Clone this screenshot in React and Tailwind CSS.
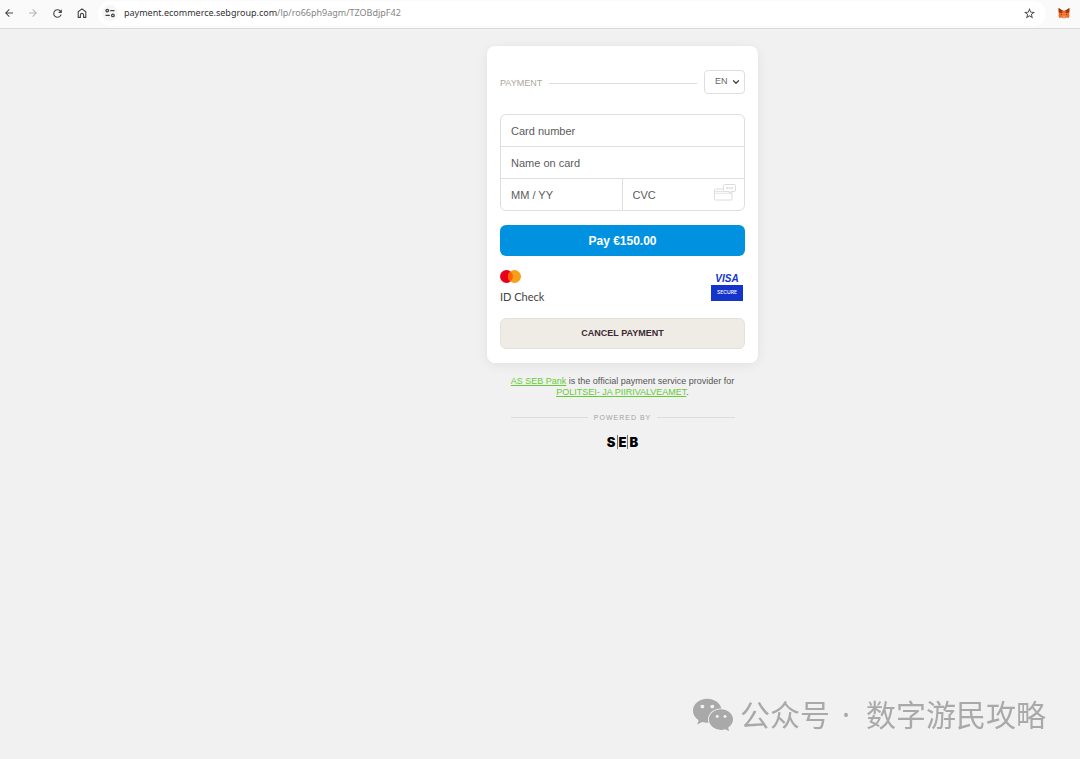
import { FaWeixin } from 'react-icons/fa'
import { MdArrowBack, MdArrowForward, MdRefresh, MdStarBorder } from 'react-icons/md'
import { ChevronDown } from 'lucide-react'

function HomeIcon() {
  return (
    <svg viewBox="0 0 12 12" className="size-3" fill="none" stroke="currentColor" strokeWidth="1.1">
      <path d="M2.2 10.4V4.8L6 1.9l3.8 2.9v5.6H7.6V8a1.6 1.6 0 0 0-3.2 0v2.4z" strokeLinejoin="round" />
    </svg>
  )
}

function SiteInfoIcon() {
  return (
    <svg viewBox="0 0 12 12" className="size-3" fill="none" stroke="currentColor" strokeWidth="1.3">
      <circle cx="3.3" cy="3.6" r="1.3" />
      <path d="M6.2 3.6h4.3M1.5 8.4h4.3" />
      <circle cx="8.9" cy="8.4" r="1.3" />
    </svg>
  )
}

function FoxIcon() {
  return (
    <svg viewBox="0 0 12 12" className="size-3">
      <path d="M.6 1 4.6 3.6h2.8L11.4 1l.3 3.6-.6 2.6.5 1.6-.9 2.3-2.2-.6-1.2.8H4.7l-1.2-.8-2.2.6L.4 8.8l.5-1.6L.3 4.6z" fill="#f26a26" />
      <path d="M.6 1 4.6 3.6 4 6 1 5.4zM11.4 1 7.4 3.6 8 6l3-.6z" fill="#93391b" />
      <path d="M4 6h4l.5 2.8L7.3 10H4.7L3.5 8.8z" fill="#f97a2e" />
      <path d="M4.7 9.6h2.6l.2 1.2h-3z" fill="#cbb9ae" />
      <path d="m3.1 6.8 1.4.6-1.3.4zM8.9 6.8l-1.4.6 1.3.4z" fill="#333" />
    </svg>
  )
}

function CvcIcon() {
  return (
    <svg viewBox="0 0 22 17" className="h-[17px] w-[22px]" fill="none" stroke="#dcdcdc">
      <rect x=".5" y="5" width="17.5" height="11" rx="1" />
      <path d="M.5 7.5H11M.5 9.3h17.5" strokeWidth=".8" />
      <path d="M10.5.5h10q1 0 1 1v5q0 1-1 1H17L15.5 9.5 15 7.5h-4.5q-1 0-1-1v-5q0-1 1-1z" fill="#fff" />
      <path d="M12 3.5h7M12 4.5h7" strokeDasharray="2 .5" strokeWidth=".8" />
    </svg>
  )
}

function MastercardMark() {
  return (
    <svg viewBox="0 0 21 13" className="h-[13px] w-[21px]">
      <circle cx="6.5" cy="6.5" r="6.5" fill="#eb001b" />
      <circle cx="14.5" cy="6.5" r="6.5" fill="#f79e1b" />
      <path d="M10.5 1.4a6.5 6.5 0 0 1 0 10.2 6.5 6.5 0 0 1 0-10.2z" fill="#ff5f00" />
    </svg>
  )
}

function BrowserBar() {
  return (
    <header className="flex h-[29px] items-center border-b border-[#dadada] bg-[#fafafa] pb-0.5 pl-[3px] pr-2.5 text-[#444]">
      <nav className="flex items-center gap-3">
        <button aria-label="Back"><MdArrowBack size={12} /></button>
        <button aria-label="Forward" className="text-[#b5b5b5]"><MdArrowForward size={12} /></button>
        <button aria-label="Reload"><MdRefresh size={13} /></button>
        <button aria-label="Home"><HomeIcon /></button>
      </nav>
      <div className="ml-2.5 flex h-[25px] flex-1 items-center rounded-full bg-white pl-1 pr-2.5">
        <button aria-label="Site information" className="flex size-4 items-center justify-center rounded-full bg-[#f6f6f6]">
          <SiteInfoIcon />
        </button>
        <div role="textbox" aria-label="Address" className="ml-1.5 flex-1 font-['Noto_Sans',sans-serif] text-[9px] text-[#333]">
          payment.ecommerce.sebgroup.com<span className="text-[#858585]">/lp/ro66ph9agm/TZOBdjpF42</span>
        </div>
        <button aria-label="Bookmark"><MdStarBorder size={13} /></button>
      </div>
      <button aria-label="Wallet" className="ml-3"><FoxIcon /></button>
    </header>
  )
}

const inputClass = 'h-[31px] w-full min-w-0 bg-transparent px-2.5 pt-px text-[11px] text-[#333] outline-none placeholder:text-[#5c5c5c]'

function PaymentCard() {
  return (
    <form className="w-[271px] rounded-lg bg-white px-[13px] pb-3.5 pt-6 shadow-[0_2px_12px_rgba(0,0,0,0.07)]">
      <div className="flex items-center">
        <h1 className="pt-1 text-[9px] text-[#aca79e]">PAYMENT</h1>
        <div className="mx-[7px] mt-0.5 h-px flex-1 bg-[#dedede]" />
        <div className="relative flex">
          <select aria-label="Language" className="h-6 w-[41px] appearance-none rounded border border-[#dedede] bg-white pl-2.5 text-[9px] text-[#666]">
            <option>EN</option>
          </select>
          <ChevronDown size={10} strokeWidth={3} className="pointer-events-none absolute right-1 top-[7px] text-[#444]" />
        </div>
      </div>

      <div className="mt-5 divide-y divide-[#dedede] rounded-md border border-[#dedede]">
        <div className="flex">
          <input aria-label="Card number" placeholder="Card number" className={inputClass} />
        </div>
        <div className="flex">
          <input aria-label="Name on card" placeholder="Name on card" className={inputClass} />
        </div>
        <div className="grid grid-cols-2 divide-x divide-[#dedede]">
          <div className="flex">
            <input aria-label="Expiry date" placeholder="MM / YY" className={inputClass} />
          </div>
          <div className="flex items-start pr-2">
            <input aria-label="CVC" placeholder="CVC" className={inputClass} />
            <div className="shrink-0 pt-[5px]"><CvcIcon /></div>
          </div>
        </div>
      </div>

      <button type="button" className="mt-3.5 h-[31px] w-full rounded-md bg-[#0092e1] text-[12px] font-bold text-white">
        Pay €150.00
      </button>

      <div className="mt-3.5 flex h-8 items-start justify-between">
        <div>
          <MastercardMark />
          <div className="mt-1.5 font-['Lato',sans-serif] text-[11px] leading-4 text-[#444]">ID Check</div>
        </div>
        <div className="mr-0.5 mt-0.5 flex w-8 flex-col items-center">
          <div className="text-[10px] font-bold italic leading-[13px] text-[#1434cb]">VISA</div>
          <div className="flex h-4 w-full items-center justify-center bg-[#1434cb] font-['Inter',sans-serif] text-[5px] font-medium text-white">
            SECURE
          </div>
        </div>
      </div>

      <button type="button" className="mt-4 h-[31px] w-full rounded-md border border-[#e6e2da] bg-[#efebe5] text-[9px] font-bold text-[#3a2a32]">
        CANCEL PAYMENT
      </button>
    </form>
  )
}

function Footer() {
  return (
    <footer className="mt-[13px] w-[224px] text-center text-[9px] leading-[11px] text-[#555]">
      <p>
        <a href="#seb" className="text-[#66cc33] underline">AS SEB Pank</a> is the official payment service provider for{' '}
        <a href="#merchant" className="text-[#66cc33] underline">POLITSEI- JA PIIRIVALVEAMET</a>.
      </p>
      <div className="mt-3.5 flex items-center gap-1.5">
        <div className="h-px flex-1 bg-[#dcdcdc]" />
        <span className="text-[7px] tracking-[1px] text-[#a3a3a3]">POWERED BY</span>
        <div className="h-px flex-1 bg-[#dcdcdc]" />
      </div>
      <div className="mt-3 flex justify-center font-['Inter',sans-serif] text-[13px] font-black leading-[14px] text-black">
        <span>S</span>
        <span className="mx-px border-x border-[#777] px-px">E</span>
        <span>B</span>
      </div>
    </footer>
  )
}

export default function App() {
  return (
    <div className="flex min-h-screen flex-col bg-[#f1f1f1] font-['Liberation_Sans',Arial,sans-serif]">
      <BrowserBar />
      <main className="flex flex-1 flex-col items-center pl-[165px] pt-[17px]">
        <PaymentCard />
        <Footer />
      </main>
      <div className="fixed bottom-5 right-[34px] flex items-center font-['Noto_Sans','Noto_Sans_CJK_SC',sans-serif] text-[30px] leading-[48px] text-[#a9a9a9]">
        <FaWeixin size={42} className="mr-1.5" />
        <span>公众号</span>
        <span className="ml-3 mr-4">·</span>
        <span>数字游民攻略</span>
      </div>
    </div>
  )
}
